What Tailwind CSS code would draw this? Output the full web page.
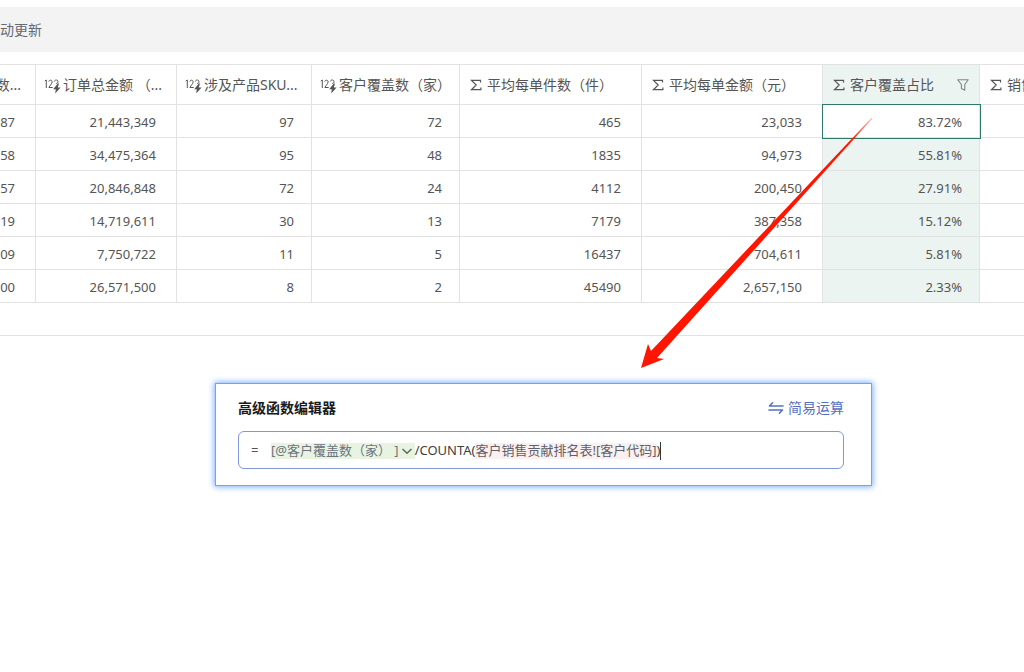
<!DOCTYPE html>
<html lang="zh-CN">
<head>
<meta charset="utf-8">
<meta name="viewport" content="width=device-width, initial-scale=1">
<title>高级函数编辑器</title>
<script src="https://cdn.jsdelivr.net/npm/@tailwindcss/browser@4"></script>
</head>
<body class="relative min-h-screen overflow-x-hidden bg-white pt-[7px] font-['Noto_Sans','Noto_Sans_CJK_SC',sans-serif] text-[#555555]">
<svg class="hidden">
  <symbol id="num" viewBox="0 0 17 18">
    <g fill="none" stroke="currentColor" stroke-width="1">
      <path d="M.8 5 2.3 4V12M4.8 5.6C5.1 3.6 8.3 3.7 8.1 6 8 7.8 5.8 9.5 4.9 11.5H8.7M10.4 5.4C10.8 3.5 14 3.5 14 5.7 14 6.8 13.2 7.4 12.1 7.5"/>
    </g>
    <path d="M13.8 7.5 9.2 13.2H11.8L11.2 17.4 16.6 11.4H13.8L15 7.5Z" fill="currentColor"/>
  </symbol>
  <symbol id="sum" viewBox="0 0 12 12">
    <path d="M10.5 3.4V1.3H1.5L6.2 6 1.4 10.7H10.9V8.6" fill="none" stroke="currentColor" stroke-width="1.2"/>
  </symbol>
</svg>

<header class="flex h-[45px] items-center bg-[#f3f3f3] text-sm text-[#646a73]">动更新</header>

<main>
  <section class="mt-3 overflow-hidden border-b border-[#e2e2e2] pb-8">
    <table class="w-full table-fixed border-separate border-spacing-0 border-t border-[#e2e2e2] text-right text-[13px] [&_td]:h-[33px] [&_td]:border-r [&_td]:border-b [&_td]:border-[#e2e2e2] [&_td]:pt-0.5 [&_td]:pr-[17px] [&_td]:leading-5 [&_td:nth-child(-n+2)]:pr-5 [&_td:nth-child(5)]:pr-5 [&_td:nth-child(6)]:pr-5 [&_td:nth-child(7)]:bg-[#ebf4f1] [&_td:last-child]:border-r-0 [&_th]:h-10 [&_th]:overflow-hidden [&_th]:border-r [&_th]:border-b [&_th]:border-[#e2e2e2] [&_th]:text-sm [&_th]:font-normal [&_th]:whitespace-nowrap [&_th:last-child]:border-r-0">
      <colgroup>
        <col class="w-9"><col class="w-[141px]"><col class="w-[135px]"><col class="w-[148px]"><col class="w-[182px]"><col class="w-[181px]"><col class="w-[157px]"><col>
      </colgroup>
      <thead>
        <tr>
          <th scope="col"><div class="flex justify-end pr-3.5">数...</div></th>
          <th scope="col"><div class="flex items-center gap-0.5 pl-2"><svg class="h-[18px] w-[17px] shrink-0"><use href="#num"/></svg>订单总金额 （...</div></th>
          <th scope="col"><div class="flex items-center gap-0.5 pl-2"><svg class="h-[18px] w-[17px] shrink-0"><use href="#num"/></svg>涉及产品SKU...</div></th>
          <th scope="col"><div class="flex items-center gap-0.5 pl-2"><svg class="h-[18px] w-[17px] shrink-0"><use href="#num"/></svg>客户覆盖数（家）</div></th>
          <th scope="col"><div class="flex items-center gap-[5px] pl-2.5"><svg class="size-3 shrink-0"><use href="#sum"/></svg>平均每单件数（件）</div></th>
          <th scope="col"><div class="flex items-center gap-[5px] pl-2.5"><svg class="size-3 shrink-0"><use href="#sum"/></svg>平均每单金额（元）</div></th>
          <th scope="col" class="bg-[#ebf4f1]"><div class="flex items-center gap-[5px] pr-2.5 pl-2.5"><svg class="size-3 shrink-0"><use href="#sum"/></svg>客户覆盖占比
            <button type="button" aria-label="筛选" class="ml-auto"><svg class="size-3" viewBox="0 0 12 12" fill="none" stroke="#7d8985" stroke-width="1.1" stroke-linejoin="round"><path d="M.8 .8H11.2L7.8 5.5V11.2L4.4 9.5V5.5Z"/></svg></button></div></th>
          <th scope="col"><div class="flex items-center gap-[5px] pl-2.5"><svg class="size-3 shrink-0"><use href="#sum"/></svg>销售</div></th>
        </tr>
      </thead>
      <tbody>
        <tr><td>87</td><td>21,443,349</td><td>97</td><td>72</td><td>465</td><td>23,033</td><td class="relative bg-white! outline outline-[#2f7a66]">83.72%</td><td></td></tr>
        <tr><td>58</td><td>34,475,364</td><td>95</td><td>48</td><td>1835</td><td>94,973</td><td>55.81%</td><td></td></tr>
        <tr><td>57</td><td>20,846,848</td><td>72</td><td>24</td><td>4112</td><td>200,450</td><td>27.91%</td><td></td></tr>
        <tr><td>19</td><td>14,719,611</td><td>30</td><td>13</td><td>7179</td><td>387,358</td><td>15.12%</td><td></td></tr>
        <tr><td>09</td><td>7,750,722</td><td>11</td><td>5</td><td>16437</td><td>704,611</td><td>5.81%</td><td></td></tr>
        <tr><td>00</td><td>26,571,500</td><td>8</td><td>2</td><td>45490</td><td>2,657,150</td><td>2.33%</td><td></td></tr>
      </tbody>
    </table>
  </section>

  <section aria-labelledby="editor-title" class="mt-[47px] mr-[152px] ml-[215px] border border-[#6ba5fb] px-[22px] pt-3 pb-4 shadow-[0_0_6px_1px_#7ab0ff]">
    <div class="flex items-center justify-between pr-[5px]">
      <h2 id="editor-title" class="text-sm leading-6 font-bold text-[#1a1a1a]">高级函数编辑器</h2>
      <button type="button" class="flex items-center gap-1 text-sm leading-6 text-[#5470c6]">
        <svg class="h-3.5 w-4" viewBox="0 0 16 14" fill="none" stroke="currentColor" stroke-width="1.6" stroke-linejoin="round" stroke-linecap="round"><path d="M15 5H1.5L4.6 1.8M1 9H14.5L11.4 12.2"/></svg>
        简易运算
      </button>
    </div>
    <div class="mt-[11px] mr-[5px] flex h-[38px] items-center rounded-md border border-[#8197dc] px-3 pt-0.5 text-[13px] whitespace-nowrap">
      <span class="w-5">=</span>
      <div role="textbox" aria-label="函数公式" contenteditable="true" class="flex items-center outline-none">
        <span class="flex h-4 items-center bg-[#e9f3e2] text-[#6c7480]">[@客户覆盖数（家） ]<button type="button" aria-label="选择字段" class="px-0.5"><svg class="size-3" viewBox="0 0 12 12" fill="none" stroke="#5c6b5c" stroke-width="1.5"><path d="M1.5 4 6 8.3 10.5 4"/></svg></button></span>
        <span class="text-[#404040]">/COUNTA(</span>
        <span class="flex h-4 items-center bg-[#fbf0ef] text-[#5c616b]">客户销售贡献排名表![客户代码]</span>
        <span class="text-[#404040]">)</span>
        <span class="h-[18px] w-px bg-[#333]"></span>
      </div>
    </div>
  </section>
</main>

<!-- Arrow from the selected cell to the formula editor -->
<svg class="pointer-events-none absolute top-[117px] left-[641px] h-[252px] w-[232px]" viewBox="641 117 232 252" aria-hidden="true">
  <defs><linearGradient id="fade" gradientUnits="userSpaceOnUse" x1="872" y1="118" x2="850" y2="142"><stop offset="0" stop-color="#ff1500" stop-opacity=".3"/><stop offset="1" stop-color="#ff1500"/></linearGradient></defs>
  <path d="M871.6 117.8 651 351 648 344 641 368 664 359 657 358 872.4 118.4Z" fill="url(#fade)"/>
</svg>
</body>
</html>
